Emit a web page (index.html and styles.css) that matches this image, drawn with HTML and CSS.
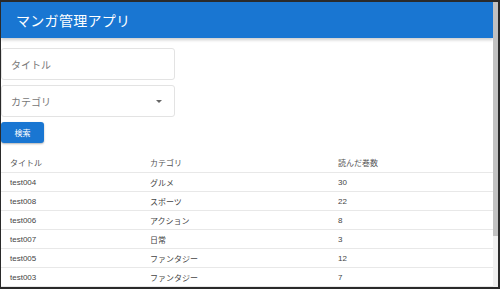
FILE: index.html
```html
<!DOCTYPE html>
<html lang="ja">
<head>
<meta charset="utf-8">
<link rel="stylesheet" href="styles.css">
</head>
<body>
<div class="frame">
  <div class="page">
    <header class="appbar"><h1 class="title">マンガ管理アプリ</h1></header>
    <form class="search">
      <div class="field"><span class="placeholder">タイトル</span></div>
      <div class="field select"><span class="placeholder">カテゴリ</span><span class="arrow"></span></div>
      <button type="button" class="btn">検索</button>
    </form>
    <table class="list">
      <thead>
        <tr><th class="c1">タイトル</th><th class="c2">カテゴリ</th><th>読んだ巻数</th></tr>
      </thead>
      <tbody>
        <tr><td>test004</td><td>グルメ</td><td>30</td></tr>
        <tr><td>test008</td><td>スポーツ</td><td>22</td></tr>
        <tr><td>test006</td><td>アクション</td><td>8</td></tr>
        <tr><td>test007</td><td>日常</td><td>3</td></tr>
        <tr><td>test005</td><td>ファンタジー</td><td>12</td></tr>
        <tr><td>test003</td><td>ファンタジー</td><td>7</td></tr>
      </tbody>
    </table>
  </div>
  <div class="scrollbar"><div class="thumb"></div></div>
</div>
</body>
</html>
```
FILE: styles.css
```css
html, body { margin: 0; padding: 0; }
body {
  background: #2a2a2a;
  width: 500px;
  height: 289px;
  overflow: hidden;
  font-family: "Liberation Sans", "Noto Sans CJK JP", sans-serif;
}
.frame {
  margin: 2px 2px 2px 1px;
  height: 285px;
  display: flex;
  background: #fff;
  overflow: hidden;
}
.page { flex: 1; min-width: 0; }
.scrollbar { width: 5px; background: #f0f0f0; }
.thumb { height: 234px; background: #c1c1c1; }
.appbar {
  height: 36px;
  background: #1976d2;
  display: flex;
  align-items: center;
  padding-left: 15px;
  box-shadow: 0 2px 3px rgba(0,0,0,0.2);
}
.title {
  margin: 0;
  color: #fff;
  font-size: 14px;
  font-weight: 400;
  letter-spacing: 0.3px;
}
.search {
  display: flex;
  flex-direction: column;
  align-items: flex-start;
  gap: 5px;
  margin-top: 10px;
}
.field {
  box-sizing: border-box;
  width: 174px;
  height: 32px;
  border: 1px solid #e3e3e3;
  border-radius: 3px;
  display: flex;
  align-items: center;
  justify-content: space-between;
  padding: 0 9px 0 9px;
}
.placeholder { font-size: 10px; color: #777; }
.arrow {
  width: 0; height: 0;
  border-left: 3.5px solid transparent;
  border-right: 3.5px solid transparent;
  border-top: 3.5px solid #666;
  margin-right: 3px;
}
.btn {
  width: 43px;
  height: 21px;
  border: 0;
  border-radius: 3px;
  background: #1976d2;
  color: #fff;
  font-family: inherit;
  font-size: 8px;
  padding: 0;
  box-shadow: 0 1px 2px rgba(0,0,0,0.3);
}
.list {
  width: 100%;
  border-collapse: collapse;
  margin-top: 9px;
  font-size: 8px;
  color: #444;
}
.list th, .list td {
  text-align: left;
  font-weight: 400;
  padding: 0 0 0 9px;
  height: 18px;
  border-bottom: 1px solid #e8e8e8;
}
.list th { height: 20px; color: #555; }
.list .c1 { width: 131px; }
.list .c2 { width: 179px; }
```
